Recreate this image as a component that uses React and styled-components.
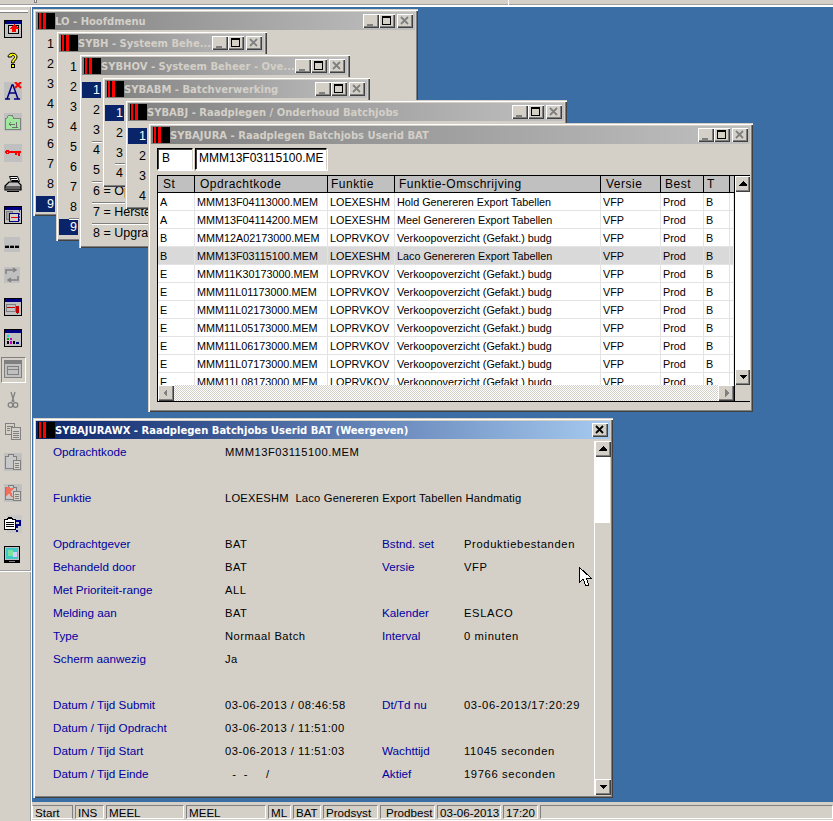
import React from 'react';
import styled, { createGlobalStyle } from 'styled-components';

const Global = createGlobalStyle`
  html, body { margin: 0; padding: 0; background: #d4d0c8; }
  #root { width: 833px; height: 821px; overflow: hidden; }
  * { box-sizing: border-box; }
`;

const Page = styled.div`
  width: 833px; height: 821px; display: grid;
  grid-template-rows: 7px 1fr 19px; grid-template-columns: 32px 1fr;
  background: #d4d0c8; font-family: "Liberation Sans", Arial, sans-serif; font-size: 12px; color: #000;
  overflow: hidden; position: relative;
`;
const TopBar = styled.div`
  grid-column: 1 / 3; display: flex; align-items: stretch; background: #d4d0c8;
  border-bottom: 2px solid #fff; box-shadow: inset 0 -1px 0 #a0a0a0;
`;
const TopGrip = styled.span`
  width: 3px; height: 3px; margin-left: 34px; border: 1px solid #808080; border-top: 0; background: #e8e8e8;
`;
const TopDivider = styled.span`
  width: 1px; margin-left: 471px; background: #fff;
`;
const LeftBar = styled.div`
  grid-row: 2 / 4; display: flex; flex-direction: column; align-items: stretch; position: relative;
  border-right: 1px solid #fff; background: #d4d0c8; width: 32px; box-shadow: inset -1px 0 0 #a0a0a0;
`;
const Grip = styled.div`
  height: 3px; margin: 3px 3px 0 0; background: #fff; border-bottom: 1px solid #808080;
`;
const Tools = styled.div`
  display: flex; flex-direction: column; padding: .5px 0 0 0;
`;
const Tool = styled.div`
  height: 30.95px; width: 26px; display: flex; align-items: center; justify-content: center; position: relative;
  & > svg { width: 18px; height: 18px; display: block; shape-rendering: crispEdges; }
`;
const ToolActive = styled(Tool)`
  &::before { content: ""; position: absolute; left: 1px; top: 3px; width: 23px; height: 24px;
    border: 1px solid; border-color: #808080 #fff #fff #808080; }
`;
const LeftRule = styled.div`
  height: 2px; background: #fff; border-top: 1px solid #a0a0a0;
`;
const Desktop = styled.div`
  position: relative; background: #3a6ea5; overflow: hidden;
`;
const StatusBar = styled.div`
  display: flex; gap: 2px; padding: 3px 0 1px 0; background: #d4d0c8; border-bottom: 1px solid #fff;
`;
const Panel = styled.div`
  width: ${p => p.$w}px; flex: ${p => p.$grow ? '1' : 'none'}; height: 14px; line-height: 13px; padding: 0 0 0 ${p => p.$pl ?? 2}px; white-space: nowrap;
  border: 1px solid; border-color: #808080 #fff #fff #808080; font-size: 11.6px; overflow: hidden;
`;
const RaisedPanel = styled(Panel)`
  border-color: #808080 #808080 #fff #fff;
`;

const Win = styled.div`
  position: absolute; left: ${p => p.$x}px; top: ${p => p.$y}px; width: ${p => p.$w}px; height: ${p => p.$h}px;
  background: #d4d0c8; padding: 3px 3px 4px 3px; display: flex; flex-direction: column;
  box-shadow: inset 1px 1px 0 #d4d0c8, inset 2px 2px 0 #fff, inset -1px -1px 0 #404040, inset -2px -2px 0 #808080;
  overflow: hidden;
`;
const Title = styled.div`
  height: 18px; flex: none; display: flex; align-items: center; padding: 0 2px 0 0;
  background: ${p => p.$active ? 'linear-gradient(90deg,#0a246a,#a6caf0)' : 'linear-gradient(90deg,#808080,#c0c0c0)'};
  color: ${p => p.$active ? '#fff' : '#d4d0c8'};
  font: bold 10px "DejaVu Sans", Verdana, sans-serif; white-space: nowrap; overflow: hidden;
`;
const TitleIcon = styled.svg`
  width: 17px; height: 16px; flex: none; margin-left: 2px; shape-rendering: crispEdges;
`;
const TitleText = styled.span`
  flex: 1; min-width: 0; overflow: hidden;
`;
const WinBtns = styled.div`
  display: flex; flex: none;
`;
const WinBtn = styled.div`
  width: 16px; height: 14px; margin-left: ${p => p.$gap ? 2 : 0}px; background: #d4d0c8;
  box-shadow: inset 1px 1px 0 #fff, inset -1px -1px 0 #404040, inset -2px -2px 0 #808080;
  display: flex; align-items: center; justify-content: center;
  & > svg { width: 12px; height: 10px; display: block; shape-rendering: crispEdges; }
`;

const Menu = styled.div`
  display: flex; flex-direction: column; padding-top: ${p => p.$pt}px; position: relative;
`;
const MenuItem = styled.div`
  display: flex; height: ${p => p.$h ?? 20}px; align-items: center; white-space: nowrap; font-size: 12.5px;
`;
const MenuKey = styled.span`
  width: 19px; height: 16px; line-height: 16px; padding-left: 11px;
  background: ${p => p.$sel ? '#0a246a' : 'transparent'}; color: ${p => p.$sel ? '#fff' : '#000'};
`;
const MenuLabel = styled.span`
  padding-left: 11px;
`;
const Rule = styled.div`
  position: absolute; left: 10px; top: ${p => p.$t}px; width: 120px; height: 1px; background: #808080; box-shadow: 0 1px 0 #fff;
`;

const Fields = styled.div`
  display: flex; gap: 2px; padding: 4px 0 0 6px; flex: none;
`;
const Input = styled.div`
  width: ${p => p.$w}px; height: 22px; line-height: 19px; padding-left: ${p => p.$pl}px; background: #fff; font-size: 12px;
  border: 1px solid; border-color: #000 #d4d0c8 #fff #000; box-shadow: inset 1px 1px 0 #404040, 1px 1px 0 #fff; overflow: hidden; white-space: nowrap;
`;
const GridFrame = styled.div`
  margin: 5px 0 0 6px; width: 593px; height: 227px; flex: none;
  display: grid; grid-template-columns: 577px 15px; grid-template-rows: 209px 16px;
  border-left: 1px solid #000; border-top: 1px solid #000; border-bottom: 1px solid #000;
`;
const GridBody = styled.div`
  grid-column: 1; grid-row: 1; overflow: hidden; background: #fff; border-right: 1px solid #000;
`;
const Cols = `37px 133px 67px 206px 60px 43px 26px 4px`;
const HeadRow = styled.div`
  display: grid; grid-template-columns: ${Cols}; height: 17px; background: #c0c0c0; border-bottom: 1px solid #000;
`;
const HeadCell = styled.div`
  border-right: 1px solid #000; padding-left: ${p => p.$pl ?? 5}px; font-size: 12px; letter-spacing: .5px; line-height: 17px; overflow: hidden; white-space: nowrap;
`;
const DataRow = styled.div`
  display: grid; grid-template-columns: ${Cols}; height: 18px; background: ${p => p.$sel ? '#d9d9d9' : '#fff'};
`;
const DataCell = styled.div`
  border-right: 1px solid #e3e3e3; border-bottom: 1px solid #e3e3e3; padding-left: 2px; font-size: 10.8px; line-height: 18px;
  overflow: hidden; white-space: nowrap;
`;
const VScroll = styled.div`
  grid-column: 2; grid-row: 1; background: #fff; display: flex; flex-direction: column; justify-content: space-between;
`;
const HScroll = styled.div`
  grid-column: 1; grid-row: 2; display: flex; justify-content: space-between; border-right: 1px solid #000;
  background: repeating-conic-gradient(#d4d0c8 0 25%, #fff 0 50%) 0 0 / 2px 2px;
`;
const ScrollBtn = styled.div`
  width: ${p => p.$wide ? 16 : 15}px; height: 16px; flex: none; background: #d4d0c8;
  box-shadow: inset 1px 1px 0 #fff, inset -1px -1px 0 #404040, inset -2px -2px 0 #808080;
  display: flex; align-items: center; justify-content: center;
  & > svg { width: 8px; height: 8px; display: block; shape-rendering: crispEdges; }
`;

const DetailBody = styled.div`
  flex: 1; display: grid; grid-template-columns: 1fr 16px; min-height: 0; padding-top: 2px;
`;
const Form = styled.div`
  display: grid; grid-template-columns: 172px 157px 82px 1fr; grid-auto-rows: 23px; padding: 0 0 0 17px; white-space: nowrap;
  align-content: start;
`;
const Label = styled.div`
  color: #0000a0; font-size: 11.7px; line-height: 22px;
`;
const Value = styled.div`
  font-size: 11.2px; line-height: 22px; letter-spacing: ${p => p.$ls ?? .5}px; white-space: pre;
  grid-column: ${p => p.$wide ? '2 / 5' : 'auto'};
`;
const DetailScroll = styled.div`
  display: flex; flex-direction: column; border-left: 1px solid #fff; height: 354px;
`;
const Thumb = styled.div`
  height: 66px; background: #fff; flex: none;
`;
const Track = styled.div`
  flex: 1;
`;
const Cursor = styled.svg`
  position: absolute; left: 546px; top: 559px; width: 14px; height: 22px; shape-rendering: crispEdges;
`;

const BarIcon = () => (
  <TitleIcon viewBox="0 0 17 16">
    <rect width="17" height="16" fill="#000" />
    <rect x="1" width="2" height="16" fill="#f00" />
    <rect x="5" width="3" height="16" fill="#f00" />
  </TitleIcon>
);
const Min = ({ d }) => <svg viewBox="0 0 12 10"><rect x="2" y="8" width="6" height="2" fill={d ? '#808080' : '#000'} /></svg>;
const Max = () => <svg viewBox="0 0 12 10"><path d="M1 0h9v9H1z M2 2v6h7V2z" fill="#000" fillRule="evenodd" /></svg>;
const Cls = ({ d }) => <svg viewBox="0 0 12 10" style={{ shapeRendering: 'auto' }}><path d="M2 1l7 7M9 1L2 8" stroke={d ? '#808080' : '#000'} strokeWidth="1.8" fill="none" /></svg>;
const Buttons = () => (
  <WinBtns>
    <WinBtn><Min d /></WinBtn><WinBtn><Max /></WinBtn><WinBtn $gap><Cls d /></WinBtn>
  </WinBtns>
);
const Arrow = ({ dir }) => {
  const p = { up: 'M4 1l4 4H0z M0 5h8v1H0z', down: 'M0 2h8L4 6z', left: 'M5 0v8L1 4z', right: 'M3 0v8l4-4z' }[dir];
  return <svg viewBox="0 0 8 8"><path d={p} fill={dir === 'left' || dir === 'right' ? '#808080' : '#000'} /></svg>;
};

const WinFrame = ({ fill = '#c0c0c0', children }) => (
  <svg viewBox="0 0 18 18">
    <rect width="18" height="18" fill="#000" />
    <rect x="1" y="1" width="16" height="3" fill="#000080" />
    <rect x="1" y="4" width="16" height="13" fill={fill} />
    {children}
  </svg>
);
const Paste = ({ red }) => (
  <svg viewBox="0 0 18 18">
    <rect width="18" height="18" fill="#c0c0c0" />
    <path d="M1.500 3.500h3v-2h5v2h3v4h-3v8h-8z" fill="#c8c8c8" stroke="#808080" />
    <rect x="9.500" y="7.500" width="7" height="9" fill="#d4d0c8" stroke="#808080" />
    <path d="M11 10h4M11 12h4M11 14h4" stroke="#808080" />
    {red && <path d="M2 3l8 1-3 3 2 6-2 0-2-4-3 3z" fill="#f07060" />}
  </svg>
);
const icons = [
  <WinFrame key="a">
    <rect x="4.500" y="5.500" width="10" height="8" fill="#d4d0c8" stroke="#000" />
    <path d="M10 4l5 5h-3v3H8V9H5z" fill="#f00" />
  </WinFrame>,
  <svg key="b" viewBox="0 0 18 18" style={{ shapeRendering: 'auto' }}>
    <path d="M4 6C4 1 13 1 13 6c0 3-3 3-3 6H7.500c0-4 3-4 3-6 0-2-3-2-3 0z" fill="#ff0" stroke="#000" />
    <rect x="7.500" y="13.500" width="3" height="3" fill="#ff0" stroke="#000" />
  </svg>,
  <svg key="c" viewBox="0 0 18 18" style={{ shapeRendering: 'auto' }}>
    <rect width="18" height="18" fill="#c0c0c0" />
    <path d="M1 17h5M10 17h6M3 17L8 3h1l5 14M5 11h7" stroke="#000080" strokeWidth="1.500" fill="none" />
    <path d="M11 0l6 6M17 0l-6 6" stroke="#f00" strokeWidth="2" />
  </svg>,
  <svg key="d" viewBox="0 0 18 18">
    <rect width="18" height="18" fill="#c0c0c0" />
    <path d="M1.500 5.500h1l2-3h4l1 3h7v11h-15z" fill="#a0e8a0" stroke="#808080" />
    <path d="M5 11h6M7 9l-2 2 2 2M8 14h6M12 9v5" stroke="#707070" fill="none" />
  </svg>,
  <svg key="e" viewBox="0 0 18 18">
    <rect width="18" height="18" fill="#c0c0c0" />
    <path d="M2 6h3v1h12v2h-1v3h-2V9h-1v2h-2V9H5v1H2V9H1V7h1z M3 8v0.500h1V8z" fill="#f00" fillRule="evenodd" />
  </svg>,
  <svg key="f" viewBox="0 0 18 18" style={{ shapeRendering: 'auto' }}>
    <path d="M5.500 1.500h8l2 5h-8z" fill="#fff" stroke="#000" />
    <path d="M1 11l4-4h9l3 3v5H1z" fill="#c0c0c0" stroke="#000" strokeWidth="1.200" />
    <path d="M1 12h16M2 14h15M3 16.500h12" stroke="#000" fill="none" />
    <path d="M7 3.500h6M8 5.500h6" stroke="#000" />
  </svg>,
  <WinFrame key="g">
    <rect x="2.500" y="5.500" width="6" height="8" fill="#a0a0a0" stroke="#808080" />
    <rect x="5.500" y="7.500" width="9" height="8" fill="#d4d0c8" stroke="#000080" />
    <path d="M6 7h8" stroke="#000080" />
    <path d="M7 11h7" stroke="#f00" />
    <path d="M15 5h1M15 8h1M15 11h1M15 14h1" stroke="#c000c0" strokeWidth="2" />
  </WinFrame>,
  <svg key="h" viewBox="0 0 18 18">
    <rect x="0" y="0" width="16" height="15" fill="#c0c0c0" />
    <path d="M1 8h4v3H1zM6 8h4v3H6zM11 8h4v3h-4z" fill="#000" />
    <path d="M1 8h4M6 8h4M11 8h4" stroke="#808080" />
  </svg>,
  <svg key="i" viewBox="0 0 18 18" style={{ shapeRendering: 'auto' }}>
    <rect width="16" height="16" fill="#c0c0c0" />
    <path d="M2 7V3h9M9 1l3 2-3 2M14 9v4H5M7 11l-3 2 3 2" stroke="#808080" fill="none" strokeWidth="1.500" />
  </svg>,
  <WinFrame key="j">
    <path d="M2 9h9V7" stroke="#c00000" strokeWidth="1" fill="none" />
    <path d="M11 8h4v6l-2 2-2-2z" fill="#c00000" />
    <rect x="2.500" y="6.500" width="9" height="7" fill="none" stroke="#808080" />
  </WinFrame>,
  <WinFrame key="k">
    <rect x="3" y="6" width="2" height="2" fill="#00e0e0" />
    <rect x="3" y="9" width="2" height="2" fill="#00a000" />
    <rect x="6" y="9" width="2" height="2" fill="#c000c0" />
    <rect x="3" y="12" width="2" height="3" fill="#000" />
    <rect x="6" y="12" width="2" height="3" fill="#c000c0" />
    <rect x="9" y="12" width="2" height="3" fill="#000" />
    <rect x="12" y="13" width="3" height="2" fill="#000080" />
  </WinFrame>,
  <svg key="l" viewBox="0 0 18 18">
    <rect width="18" height="18" fill="#808080" />
    <rect x="1" y="1" width="16" height="16" fill="#c0c0c0" />
    <rect x="1" y="1" width="16" height="3" fill="#808080" />
    <rect x="3.500" y="6.500" width="11" height="8" fill="#c0c0c0" stroke="#808080" />
    <path d="M4 9.500h10" stroke="#808080" />
  </svg>,
  <svg key="m" viewBox="0 0 18 18" style={{ shapeRendering: 'auto' }}>
    <path d="M7 1l3 10M11 1L8 11" stroke="#808080" strokeWidth="1.300" />
    <circle cx="6.500" cy="14" r="2.300" fill="none" stroke="#808080" strokeWidth="1.300" />
    <circle cx="11.500" cy="14" r="2.300" fill="none" stroke="#808080" strokeWidth="1.300" />
  </svg>,
  <svg key="n" viewBox="0 0 18 18">
    <rect x="1.500" y="1.500" width="9" height="11" fill="#d4d0c8" stroke="#808080" />
    <rect x="7.500" y="5.500" width="9" height="12" fill="#d4d0c8" stroke="#808080" />
    <path d="M3 4h6M3 6h3M3 8h3M9 9h6M9 11h6M9 13h6M9 15h6" stroke="#808080" />
  </svg>,
  <Paste key="o" />,
  <Paste key="p" red />,
  <svg key="q" viewBox="0 0 18 18">
    <rect x="3" width="15" height="18" fill="#c8c8c8" />
    <path d="M0.500 4.500h3l1-2h3l1 2h3v10H0.500z" fill="#fff" stroke="#000" />
    <path d="M2 7h8M2 9h8M2 11h8M3 3h4" stroke="#000" />
    <path d="M12 5h5v6h-3v2h-2v-4h3V7h-3zM12 15h2v2h-2z" fill="#000080" />
  </svg>,
  <svg key="r" viewBox="0 0 18 18">
    <rect x="0.500" y="0.500" width="15" height="14" fill="#c0c0c0" stroke="#000" />
    <rect x="2" y="2" width="12" height="11" fill="#40c8c8" />
    <rect x="4" y="4" width="5" height="6" fill="#80e0a0" />
    <rect x="9" y="6" width="4" height="5" fill="#d0d0ff" />
    <rect y="15" width="16" height="2" fill="#000" />
    <rect x="5" y="15" width="6" height="1" fill="#808080" />
  </svg>,
];

const rows = [
  ['A', 'MMM13F04113000.MEM', 'LOEXESHM', 'Hold Genereren Export Tabellen', 'VFP', 'Prod', 'B'],
  ['A', 'MMM13F04114200.MEM', 'LOEXESHM', 'Meel Genereren Export Tabellen', 'VFP', 'Prod', 'B'],
  ['B', 'MMM12A02173000.MEM', 'LOPRVKOV', 'Verkoopoverzicht (Gefakt.) budg', 'VFP', 'Prod', 'B'],
  ['B', 'MMM13F03115100.MEM', 'LOEXESHM', 'Laco Genereren Export Tabellen', 'VFP', 'Prod', 'B'],
  ...['MMM11K30173000', 'MMM11L01173000', 'MMM11L02173000', 'MMM11L05173000', 'MMM11L06173000', 'MMM11L07173000', 'MMM11L08173000']
    .map(c => ['E', `${c}.MEM`, 'LOPRVKOV', 'Verkoopoverzicht (Gefakt.) budg', 'VFP', 'Prod', 'B']),
];
const heads = ['St', 'Opdrachtkode', 'Funktie', 'Funktie-Omschrijving', 'Versie', 'Best', 'T', ''];

const detail = [
  ['Opdrachtkode', 'MMM13F03115100.MEM', '', ''],
  ['', '', '', ''],
  ['Funktie', 'LOEXESHM  Laco Genereren Export Tabellen Handmatig', '', ''],
  ['', '', '', ''],
  ['Opdrachtgever', 'BAT', 'Bstnd. set', 'Produktiebestanden'],
  ['Behandeld door', 'BAT', 'Versie', 'VFP'],
  ['Met Prioriteit-range', 'ALL', '', ''],
  ['Melding aan', 'BAT', 'Kalender', 'ESLACO'],
  ['Type', 'Normaal Batch', 'Interval', '0 minuten'],
  ['Scherm aanwezig', 'Ja', '', ''],
  ['', '', '', ''],
  ['Datum / Tijd Submit', '03-06-2013 / 08:46:58', 'Dt/Td nu', '03-06-2013/17:20:29'],
  ['Datum / Tijd Opdracht', '03-06-2013 / 11:51:00', '', ''],
  ['Datum / Tijd Start', '03-06-2013 / 11:51:03', 'Wachttijd', '11045 seconden'],
  ['Datum / Tijd Einde', '  -  -     /', 'Aktief', '19766 seconden'],
];

const status = [['Start', 41, 1], ['INS', 29], ['MEEL', 78], ['MEEL', 80], ['ML', 23], ['BAT', 28], ['Prodsyst', 55], ['Prodbest', 55, 0, 5], ['03-06-2013', 64], ['17:20', 35], ['', 0]];

function MenuWin({ x, y, w, h, title, pt, items, rules = [] }) {
  return (
    <Win $x={x} $y={y} $w={w} $h={h}>
      <Title><BarIcon /><TitleText>{title}</TitleText><Buttons /></Title>
      <Menu $pt={pt}>
        {items.map((it, i) => (
          <MenuItem key={i} $h={it.h}>
            {it.l ? <MenuLabel>{it.l}</MenuLabel> : <MenuKey $sel={it.sel}>{it.k}</MenuKey>}
          </MenuItem>
        ))}
        {rules.map(t => <Rule key={t} $t={t} />)}
      </Menu>
    </Win>
  );
}
const nums = (n, sel) => Array.from({ length: n }, (_, i) => ({ k: i + 1, sel: sel === i + 1 }));

export default function App() {
  return (
    <Page>
      <Global />
      <TopBar><TopGrip /><TopDivider /></TopBar>
      <LeftBar>
        <Grip />
        <Tools>
          {icons.map((ic, i) => i === 11 ? <ToolActive key={i}>{ic}</ToolActive> : <Tool key={i}>{ic}</Tool>)}
        </Tools>
        <LeftRule />
      </LeftBar>
      <Desktop>
        <MenuWin x={1} y={2} w={385} h={207} title="LO - Hoofdmenu" pt={4} items={nums(9, 9)} />
        <MenuWin x={24} y={24} w={211} h={210} title="SYBH - Systeem Behe..." pt={5} items={nums(9, 9)} rules={[166]} />
        <MenuWin x={47} y={47} w={271} h={194} title="SYBHOV - Systeem Beheer - Ove..." pt={5}
          items={[...nums(5, 1), { l: '6 = Opvragen', h: 21 }, { l: '7 = Herstel', h: 21 }, { l: '8 = Upgrade', h: 21 }]} rules={[66, 106, 127, 148]} />
        <MenuWin x={70} y={70} w={268} h={110} title="SYBABM - Batchverwerking" pt={5} items={nums(4, 1)} rules={[65]} />
        <MenuWin x={93} y={93} w={442} h={109} title="SYBABJ - Raadplegen / Onderhoud Batchjobs" pt={5} items={nums(4, 1)} />
        <Win $x={116} $y={116} $w={605} $h={289}>
          <Title><BarIcon /><TitleText>SYBAJURA - Raadplegen Batchjobs Userid BAT</TitleText><Buttons /></Title>
          <Fields>
            <Input $w={36} $pl={4}>B</Input>
            <Input $w={132} $pl={3}>MMM13F03115100.ME</Input>
          </Fields>
          <GridFrame>
            <GridBody>
              <HeadRow>{heads.map((h, i) => <HeadCell key={i} $pl={i === 2 ? 3 : i === 3 ? 4 : i === 5 ? 4 : i === 6 ? 3 : 5}>{h}</HeadCell>)}</HeadRow>
              {rows.map((r, i) => (
                <DataRow key={i} $sel={i === 3}>
                  {r.map((c, j) => <DataCell key={j}>{c}</DataCell>)}
                  <DataCell />
                </DataRow>
              ))}
            </GridBody>
            <VScroll>
              <ScrollBtn><Arrow dir="up" /></ScrollBtn>
              <ScrollBtn><Arrow dir="down" /></ScrollBtn>
            </VScroll>
            <HScroll>
              <ScrollBtn $wide><Arrow dir="left" /></ScrollBtn>
              <ScrollBtn $wide><Arrow dir="right" /></ScrollBtn>
            </HScroll>
          </GridFrame>
        </Win>
        <Win $x={1} $y={411} $w={580} $h={380}>
          <Title $active>
            <BarIcon />
            <TitleText>SYBAJURAWX - Raadplegen Batchjobs Userid BAT (Weergeven)</TitleText>
            <WinBtns><WinBtn><Cls /></WinBtn></WinBtns>
          </Title>
          <DetailBody>
            <Form>
              {detail.flatMap((r, i) => {
                const wide = r[1].startsWith('LOEXES');
                return [
                  <Label key={`a${i}`}>{r[0]}</Label>,
                  <Value key={`b${i}`} $wide={wide} $ls={wide ? .2 : undefined}>{r[1]}</Value>,
                  ...(wide ? [] : [<Label key={`c${i}`}>{r[2]}</Label>, <Value key={`d${i}`} $ls={.64}>{r[3]}</Value>]),
                ];
              })}
            </Form>
            <DetailScroll>
              <ScrollBtn $wide><Arrow dir="up" /></ScrollBtn>
              <Thumb />
              <Track />
              <ScrollBtn $wide><Arrow dir="down" /></ScrollBtn>
            </DetailScroll>
          </DetailBody>
        </Win>
        <Cursor viewBox="0 0 14 22">
          <path d="M1 1v16l4-4 3 7 3-1-3-7h5z" fill="#fff" stroke="#000" />
        </Cursor>
      </Desktop>
      <StatusBar>
        {status.map(([t, w, r, pl], i) => r
          ? <RaisedPanel key={i} $w={w}>{t}</RaisedPanel>
          : <Panel key={i} $w={w} $pl={pl} $grow={w === 0}>{t}</Panel>)}
      </StatusBar>
    </Page>
  );
}
